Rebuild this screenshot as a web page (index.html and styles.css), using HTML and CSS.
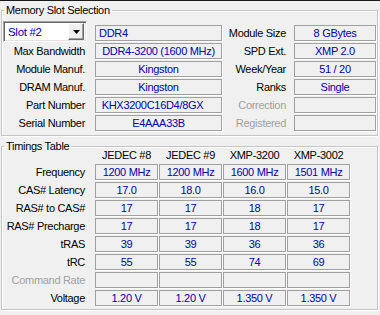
FILE: index.html
```html
<!DOCTYPE html>
<html lang="en">
<head>
    <meta charset="UTF-8">
    <title>SPD</title>
    <link rel="stylesheet" href="styles.css">
</head>
<body>
    <div class="panel">
        <!-- Memory Slot Selection -->
        <fieldset class="group slot-group">
            <legend>Memory Slot Selection</legend>
            <div class="slot-grid">
                <div class="combo">
                    <span class="combo-value">Slot #2</span>
                    <span class="combo-btn">
                        <svg width="7" height="4" viewBox="0 0 7 4"><path d="M0 0H7L3.5 4Z" fill="#000"/></svg>
                    </span>
                </div>
                <div class="box box-left">DDR4</div>
                <div class="label">Module Size</div>
                <div class="box">8 GBytes</div>

                <div class="label">Max Bandwidth</div>
                <div class="box">DDR4-3200 (1600 MHz)</div>
                <div class="label">SPD Ext.</div>
                <div class="box">XMP 2.0</div>

                <div class="label">Module Manuf.</div>
                <div class="box">Kingston</div>
                <div class="label">Week/Year</div>
                <div class="box">51 / 20</div>

                <div class="label">DRAM Manuf.</div>
                <div class="box">Kingston</div>
                <div class="label">Ranks</div>
                <div class="box">Single</div>

                <div class="label">Part Number</div>
                <div class="box box-part">KHX3200C16D4/8GX</div>
                <div class="label disabled">Correction</div>
                <div class="box"></div>

                <div class="label">Serial Number</div>
                <div class="box">E4AAA33B</div>
                <div class="label disabled">Registered</div>
                <div class="box"></div>
            </div>
        </fieldset>

        <!-- Timings Table -->
        <fieldset class="group timing-group">
            <legend>Timings Table</legend>
            <div class="timing-grid">
                <div></div>
                <div class="head">JEDEC #8</div>
                <div class="head">JEDEC #9</div>
                <div class="head">XMP-3200</div>
                <div class="head">XMP-3002</div>

                <div class="label">Frequency</div>
                <div class="box">1200 MHz</div>
                <div class="box">1200 MHz</div>
                <div class="box">1600 MHz</div>
                <div class="box">1501 MHz</div>

                <div class="label">CAS# Latency</div>
                <div class="box">17.0</div>
                <div class="box">18.0</div>
                <div class="box">16.0</div>
                <div class="box">15.0</div>

                <div class="label">RAS# to CAS#</div>
                <div class="box">17</div>
                <div class="box">17</div>
                <div class="box">18</div>
                <div class="box">17</div>

                <div class="label">RAS# Precharge</div>
                <div class="box">17</div>
                <div class="box">17</div>
                <div class="box">18</div>
                <div class="box">17</div>

                <div class="label">tRAS</div>
                <div class="box">39</div>
                <div class="box">39</div>
                <div class="box">36</div>
                <div class="box">36</div>

                <div class="label">tRC</div>
                <div class="box">55</div>
                <div class="box">55</div>
                <div class="box">74</div>
                <div class="box">69</div>

                <div class="label disabled">Command Rate</div>
                <div class="box"></div>
                <div class="box"></div>
                <div class="box"></div>
                <div class="box"></div>

                <div class="label">Voltage</div>
                <div class="box">1.20 V</div>
                <div class="box">1.20 V</div>
                <div class="box">1.350 V</div>
                <div class="box">1.350 V</div>
            </div>
        </fieldset>
    </div>
</body>
</html>
```

FILE: styles.css
```css
body {
    margin: 0;
    background-color: #f0f0f0;
    font-family: "Liberation Sans", Arial, sans-serif;
    font-size: 11px;
    letter-spacing: -0.3px;
    color: #000;
}
.panel {
    border-top: 1px solid #1a1a1a;
    height: 314px;
    overflow: hidden;
}
.group {
    box-sizing: border-box;
    width: 377px;
    margin: 0 0 0 1px;
    padding: 0;
    border: 1px solid #c4c4c4;
    box-shadow: inset 1px 1px 0 #fff, 1px 1px 0 #fff;
    min-width: 0;
}
.group legend {
    margin-left: 2px;
    padding: 0 2px;
    line-height: 13px;
}
.slot-group {
    margin-top: 3px;
    padding-top: 8px;
    padding-bottom: 4px;
}
.timing-group {
    margin-top: 4px;
    padding-bottom: 3px;
}
.slot-grid {
    display: grid;
    grid-template-columns: 93px 127px 72px 82px;
    grid-auto-rows: 16px;
    row-gap: 2px;
}
.timing-grid {
    display: grid;
    grid-template-columns: 92px repeat(4, 63px);
    grid-template-rows: 9px;
    grid-auto-rows: 16px;
    column-gap: 1px;
    row-gap: 2px;
}
.label {
    text-align: right;
    white-space: nowrap;
    line-height: 16px;
    padding-right: 10px;
}
.slot-grid .label:nth-child(4n+3) {
    padding-right: 8px;
}
.timing-grid .label {
    padding-right: 9px;
}
.disabled {
    color: #a0a0a0;
}
.head {
    text-align: center;
    line-height: 11px;
    margin-top: -3px;
    white-space: nowrap;
}
.box {
    box-sizing: border-box;
    height: 16px;
    border: 1px solid #a0a0a0;
    box-shadow: 1px 1px 0 #fff;
    line-height: 14px;
    text-align: center;
    color: #0000b4;
    white-space: nowrap;
    overflow: hidden;
}
.box-left {
    text-align: left;
    padding-left: 3px;
}
.box-part {
    padding-right: 12px;
}
.combo {
    box-sizing: border-box;
    height: 21px;
    width: 84px;
    margin: -4px 0 0 1px;
    display: flex;
    align-items: center;
    justify-content: space-between;
    background-color: #fff;
    border: 1px solid #a0a0a0;
    border-right-color: #fff;
    border-bottom-color: #fff;
    box-shadow: inset 1px 1px 0 #696969, inset -1px -1px 0 #e3e3e3;
    padding: 2px;
}
.combo-value {
    color: #0000b4;
    padding-left: 2px;
    font-size: 11.5px;
}
.combo-btn {
    box-sizing: border-box;
    width: 16px;
    height: 17px;
    display: flex;
    align-items: center;
    justify-content: center;
    background-color: #f0f0f0;
    border: 1px solid #fff;
    border-right-color: #696969;
    border-bottom-color: #696969;
    box-shadow: inset -1px -1px 0 #a0a0a0;
}
```
